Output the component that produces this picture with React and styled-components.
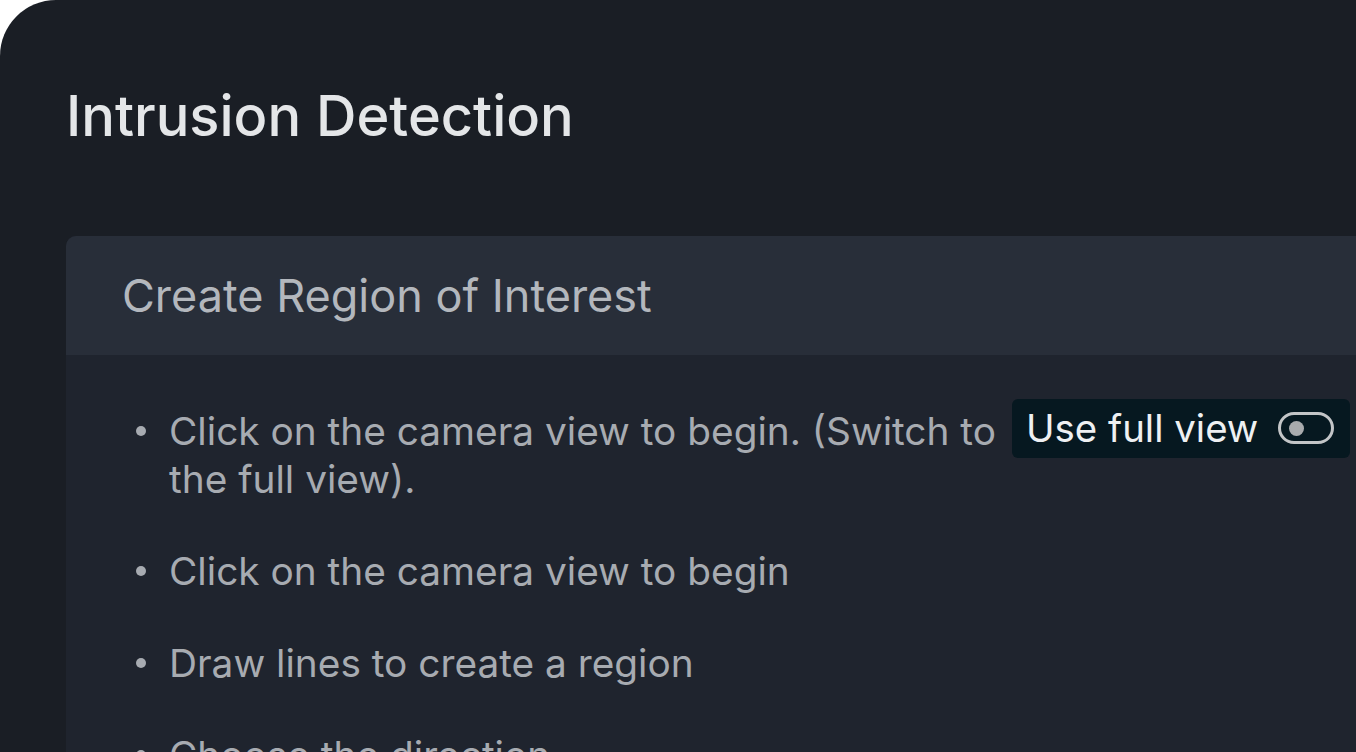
import React from "react";
import styled, { createGlobalStyle } from "styled-components";

const GlobalStyle = createGlobalStyle`
  html, body {
    margin: 0;
    padding: 0;
    background: #ffffff;
    overflow: hidden;
  }
  body {
    font-family: Inter, "Noto Sans", sans-serif;
  }
`;

const Page = styled.div`
  width: 1356px;
  height: 752px;
  overflow: hidden;
  background: #1a1e25;
  border-top-left-radius: 56px;
  padding: 84px 0 0 66px;
  box-sizing: border-box;
`;

const Title = styled.h1`
  margin: 0;
  font-size: 56px;
  font-weight: 500;
  line-height: 64px;
  color: #e4e6e8;
`;

const Card = styled.section`
  margin-top: 88px;
  width: 1400px;
  border-radius: 10px;
  overflow: hidden;
  background: #1f242e;
`;

const CardHeader = styled.div`
  height: 119px;
  background: #282e39;
  display: flex;
  align-items: center;
  padding-left: 56px;
  font-size: 45px;
  font-weight: 400;
  color: #b3b7bd;
`;

const List = styled.ul`
  margin: 0;
  padding: 53px 0 0 103px;
  list-style: none;
`;

const Item = styled.li`
  position: relative;
  font-size: 38.8px;
  line-height: 46px;
  color: #a7abb1;
  margin-bottom: 46px;
  max-width: 1240px;

  &::before {
    content: "";
    position: absolute;
    left: -33px;
    top: 18px;
    width: 10px;
    height: 10px;
    border-radius: 50%;
    background: #a7abb1;
  }
`;

const Chip = styled.span`
  display: inline-flex;
  align-items: center;
  gap: 20px;
  margin: -14px 0 -2px 16px;
  padding: 0 16px 0 14px;
  height: 59px;
  vertical-align: middle;
  background: #061820;
  border-radius: 6px;
  color: #eef0f2;
  font-size: 38.4px;
`;

const Toggle = styled.span`
  width: 42px;
  height: 26px;
  border: 3px solid #c3c5c7;
  border-radius: 16px;
  display: inline-flex;
  align-items: center;
  padding-left: 8px;

  &::after {
    content: "";
    width: 15px;
    height: 15px;
    border-radius: 50%;
    background: #a9abad;
  }
`;

export default function App() {
  return (
    <>
      <GlobalStyle />
      <Page>
        <Title>Intrusion Detection</Title>
        <Card>
          <CardHeader>Create Region of Interest</CardHeader>
          <List>
            <Item>
              Click on the camera view to begin. (Switch to
              <Chip>
                Use full view
                <Toggle />
              </Chip>
              <br />
              the full view).
            </Item>
            <Item>Click on the camera view to begin</Item>
            <Item>Draw lines to create a region</Item>
            <Item>Choose the direction</Item>
          </List>
        </Card>
      </Page>
    </>
  );
}
